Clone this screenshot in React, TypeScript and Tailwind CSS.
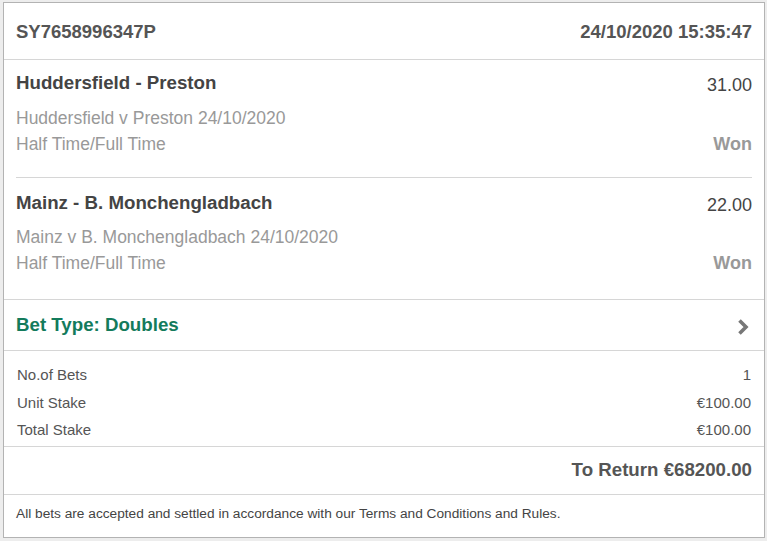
import React from "react";

const font = { fontFamily: '"Liberation Sans", Arial, sans-serif' };

function Match({ title, odds, line, pt, mt, pb, inset }: { title: string; odds: string; line: string; pt: string; mt: string; pb: string; inset?: boolean }) {
  return (
    <div className={inset ? "px-[12px]" : "px-[12px] border-b border-[#d6d6d6]"}>
      <div className={`${pt} ${pb} ${inset ? "border-b border-[#d6d6d6]" : ""}`}>
        <div className="flex justify-between h-[25px]">
          <div className="h-[22px] leading-[22px] text-[18.7px] font-bold text-[#444]">{title}</div>
          <div className="h-[22px] leading-[22px] mt-[2px] text-[18px] text-[#444]">{odds}</div>
        </div>
        <div className={`${mt} h-[26px] leading-[26px] text-[17.5px] text-[#999]`}>{line}</div>
        <div className="flex justify-between h-[26px] leading-[26px]">
          <span className="text-[17.5px] text-[#999]">Half Time/Full Time</span>
          <span className="text-[18px] font-bold text-[#999]">Won</span>
        </div>
      </div>
    </div>
  );
}

export default function App() {
  return (
    <div className="w-[767px] h-[541px] bg-[#ededed] pt-[2px] pl-[3px]" style={font}>
      <div className="w-[762px] h-[536px] bg-white border border-[#b3b3b3] flex flex-col">
        <div className="h-[57px] px-[12px] flex items-center justify-between border-b border-[#d6d6d6] text-[18.5px] font-bold text-[#555]">
          <span className="mt-[2px]">SY7658996347P</span>
          <span className="mt-[2px]">24/10/2020 15:35:47</span>
        </div>
        <Match title="Huddersfield - Preston" odds="31.00" line="Huddersfield v Preston 24/10/2020" pt="pt-[12px]" mt="mt-[8px]" pb="pb-[20px]" inset />
        <Match title="Mainz - B. Monchengladbach" odds="22.00" line="Mainz v B. Monchengladbach 24/10/2020" pt="pt-[14px]" mt="mt-[7px]" pb="pb-[23px]" />
        <div className="h-[51px] px-[12px] flex items-center justify-between border-b border-[#d6d6d6]">
          <span className="text-[18.7px] font-bold text-[#137b5c]">Bet Type: Doubles</span>
          <svg width="14" height="18" viewBox="0 0 14 18" className="mr-[2px] mt-[4px]">
            <path d="M3.5 2.5 L10 9 L3.5 15.5" fill="none" stroke="#777" strokeWidth="3.6" strokeLinejoin="miter" strokeLinecap="butt" />
          </svg>
        </div>
        <div className="h-[96px] px-[13px] pt-[14px] border-b border-[#d6d6d6] text-[15px] text-[#555]">
          <div className="flex justify-between h-[28px] leading-[20px]">
            <span>No.of Bets</span>
            <span>1</span>
          </div>
          <div className="flex justify-between h-[27px] leading-[20px]">
            <span>Unit Stake</span>
            <span>€100.00</span>
          </div>
          <div className="flex justify-between h-[27px] leading-[20px]">
            <span>Total Stake</span>
            <span>€100.00</span>
          </div>
        </div>
        <div className="h-[48px] px-[12px] flex items-center justify-end border-b border-[#d6d6d6] text-[18.7px] font-bold text-[#555]">
          <span className="mt-[0px]">To Return €68200.00</span>
        </div>
        <div className="flex-1 px-[12px] flex items-center text-[13.7px] text-[#444]">
          <span className="mt-[-4px]">All bets are accepted and settled in accordance with our Terms and Conditions and Rules.</span>
        </div>
      </div>
    </div>
  );
}
